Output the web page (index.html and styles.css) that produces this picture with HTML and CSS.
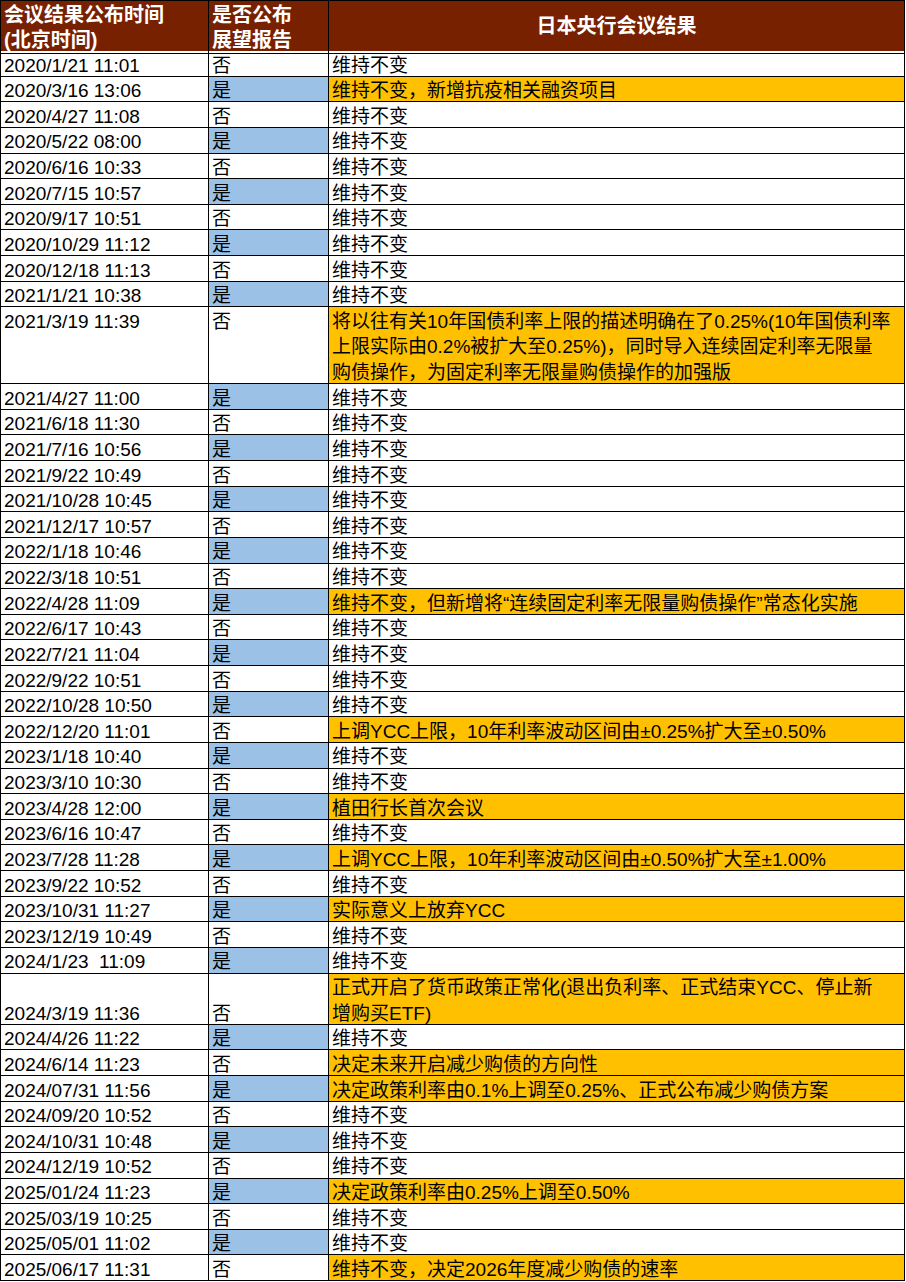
FILE: index.html
```html
<!DOCTYPE html>
<html lang="zh-CN">
<head>
<meta charset="utf-8">
<title>日本央行会议结果</title>
<link rel="stylesheet" href="styles.css">
</head>
<body>
<div class="sheet">
  <div class="row head">
    <div class="cell h-left">会议结果公布时间<br>(北京时间)</div>
    <div class="cell h-left">是否公布<br>展望报告</div>
    <div class="cell h-center">日本央行会议结果</div>
  </div>

  <div class="row"><div class="cell">2020/1/21 11:01</div><div class="cell">否</div><div class="cell">维持不变</div></div>
  <div class="row"><div class="cell">2020/3/16 13:06</div><div class="cell yes">是</div><div class="cell hl">维持不变，新增抗疫相关融资项目</div></div>
  <div class="row"><div class="cell">2020/4/27 11:08</div><div class="cell">否</div><div class="cell">维持不变</div></div>
  <div class="row"><div class="cell">2020/5/22 08:00</div><div class="cell yes">是</div><div class="cell">维持不变</div></div>
  <div class="row"><div class="cell">2020/6/16 10:33</div><div class="cell">否</div><div class="cell">维持不变</div></div>
  <div class="row"><div class="cell">2020/7/15 10:57</div><div class="cell yes">是</div><div class="cell">维持不变</div></div>
  <div class="row"><div class="cell">2020/9/17 10:51</div><div class="cell">否</div><div class="cell">维持不变</div></div>
  <div class="row"><div class="cell">2020/10/29 11:12</div><div class="cell yes">是</div><div class="cell">维持不变</div></div>
  <div class="row"><div class="cell">2020/12/18 11:13</div><div class="cell">否</div><div class="cell">维持不变</div></div>
  <div class="row"><div class="cell">2021/1/21 10:38</div><div class="cell yes">是</div><div class="cell">维持不变</div></div>
  <div class="row r3"><div class="cell">2021/3/19 11:39</div><div class="cell">否</div><div class="cell hl">将以往有关10年国债利率上限的描述明确在了0.25%(10年国债利率<br>上限实际由0.2%被扩大至0.25%)，同时导入连续固定利率无限量<br>购债操作，为固定利率无限量购债操作的加强版</div></div>
  <div class="row"><div class="cell">2021/4/27 11:00</div><div class="cell yes">是</div><div class="cell">维持不变</div></div>
  <div class="row"><div class="cell">2021/6/18 11:30</div><div class="cell">否</div><div class="cell">维持不变</div></div>
  <div class="row"><div class="cell">2021/7/16 10:56</div><div class="cell yes">是</div><div class="cell">维持不变</div></div>
  <div class="row"><div class="cell">2021/9/22 10:49</div><div class="cell">否</div><div class="cell">维持不变</div></div>
  <div class="row"><div class="cell">2021/10/28 10:45</div><div class="cell yes">是</div><div class="cell">维持不变</div></div>
  <div class="row"><div class="cell">2021/12/17 10:57</div><div class="cell">否</div><div class="cell">维持不变</div></div>
  <div class="row"><div class="cell">2022/1/18 10:46</div><div class="cell yes">是</div><div class="cell">维持不变</div></div>
  <div class="row"><div class="cell">2022/3/18 10:51</div><div class="cell">否</div><div class="cell">维持不变</div></div>
  <div class="row"><div class="cell">2022/4/28 11:09</div><div class="cell yes">是</div><div class="cell hl">维持不变，但新增将“连续固定利率无限量购债操作”常态化实施</div></div>
  <div class="row"><div class="cell">2022/6/17 10:43</div><div class="cell">否</div><div class="cell">维持不变</div></div>
  <div class="row"><div class="cell">2022/7/21 11:04</div><div class="cell yes">是</div><div class="cell">维持不变</div></div>
  <div class="row"><div class="cell">2022/9/22 10:51</div><div class="cell">否</div><div class="cell">维持不变</div></div>
  <div class="row"><div class="cell">2022/10/28 10:50</div><div class="cell yes">是</div><div class="cell">维持不变</div></div>
  <div class="row"><div class="cell">2022/12/20 11:01</div><div class="cell">否</div><div class="cell hl">上调YCC上限，10年利率波动区间由±0.25%扩大至±0.50%</div></div>
  <div class="row"><div class="cell">2023/1/18 10:40</div><div class="cell yes">是</div><div class="cell">维持不变</div></div>
  <div class="row"><div class="cell">2023/3/10 10:30</div><div class="cell">否</div><div class="cell">维持不变</div></div>
  <div class="row"><div class="cell">2023/4/28 12:00</div><div class="cell yes">是</div><div class="cell hl">植田行长首次会议</div></div>
  <div class="row"><div class="cell">2023/6/16 10:47</div><div class="cell">否</div><div class="cell">维持不变</div></div>
  <div class="row"><div class="cell">2023/7/28 11:28</div><div class="cell yes">是</div><div class="cell hl">上调YCC上限，10年利率波动区间由±0.50%扩大至±1.00%</div></div>
  <div class="row"><div class="cell">2023/9/22 10:52</div><div class="cell">否</div><div class="cell">维持不变</div></div>
  <div class="row"><div class="cell">2023/10/31 11:27</div><div class="cell yes">是</div><div class="cell hl">实际意义上放弃YCC</div></div>
  <div class="row"><div class="cell">2023/12/19 10:49</div><div class="cell">否</div><div class="cell">维持不变</div></div>
  <div class="row"><div class="cell">2024/1/23  11:09</div><div class="cell yes">是</div><div class="cell">维持不变</div></div>
  <div class="row r2"><div class="cell bottom">2024/3/19 11:36</div><div class="cell bottom">否</div><div class="cell hl">正式开启了货币政策正常化(退出负利率、正式结束YCC、停止新<br>增购买ETF)</div></div>
  <div class="row"><div class="cell">2024/4/26 11:22</div><div class="cell yes">是</div><div class="cell">维持不变</div></div>
  <div class="row"><div class="cell">2024/6/14 11:23</div><div class="cell">否</div><div class="cell hl">决定未来开启减少购债的方向性</div></div>
  <div class="row"><div class="cell">2024/07/31 11:56</div><div class="cell yes">是</div><div class="cell hl">决定政策利率由0.1%上调至0.25%、正式公布减少购债方案</div></div>
  <div class="row"><div class="cell">2024/09/20 10:52</div><div class="cell">否</div><div class="cell">维持不变</div></div>
  <div class="row"><div class="cell">2024/10/31 10:48</div><div class="cell yes">是</div><div class="cell">维持不变</div></div>
  <div class="row"><div class="cell">2024/12/19 10:52</div><div class="cell">否</div><div class="cell">维持不变</div></div>
  <div class="row"><div class="cell">2025/01/24 11:23</div><div class="cell yes">是</div><div class="cell hl">决定政策利率由0.25%上调至0.50%</div></div>
  <div class="row"><div class="cell">2025/03/19 10:25</div><div class="cell">否</div><div class="cell">维持不变</div></div>
  <div class="row"><div class="cell">2025/05/01 11:02</div><div class="cell yes">是</div><div class="cell">维持不变</div></div>
  <div class="row"><div class="cell">2025/06/17 11:31</div><div class="cell">否</div><div class="cell hl">维持不变，决定2026年度减少购债的速率</div></div>
</div>
</body>
</html>
```

FILE: styles.css
```css
html, body {
  margin: 0;
  padding: 0;
  background: #ffffff;
}

.sheet {
  width: 905px;
  box-sizing: border-box;
  border-top: 1px solid #000;
  border-left: 1px solid #000;
  font-family: "Liberation Sans", Arial, "Noto Sans CJK SC", sans-serif;
  font-size: 19px;
  color: #000;
}

.row {
  display: grid;
  grid-template-columns: 208px 120px 576px;
  height: 25.625px;
}

.row.r2 { height: 51.25px; }
.row.r3 { height: 76.875px; }

.cell {
  box-sizing: border-box;
  border-right: 1px solid #000;
  border-bottom: 1px solid #000;
  padding: 1.5px 0 0 3px;
  line-height: 25.625px;
  white-space: pre;
  overflow: hidden;
}

.cell.bottom {
  padding-top: 27.1px;
}

.cell.yes {
  background: #9bc2e6;
}

.cell.hl {
  background: #ffc000;
}

.row.head {
  height: 50px;
  background: #772100;
  color: #ffffff;
  font-weight: bold;
  font-size: 20px;
}

.head .cell {
  line-height: 25px;
  padding-top: 2px;
  overflow: visible;
}

.head .h-center {
  text-align: center;
  line-height: 48px;
  padding: 1px 0 0 0;
}
```
